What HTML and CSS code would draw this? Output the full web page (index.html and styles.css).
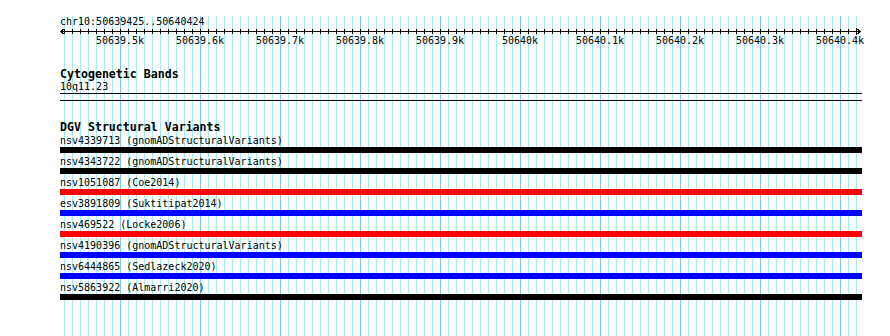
FILE: index.html
```html
<!DOCTYPE html>
<html lang="en">
<head>
    <meta charset="UTF-8">
    <title>chr10:50639425..50640424</title>
    <link rel="stylesheet" href="styles.css">
</head>
<body>
    <div class="view">
        <div class="ruler">
            <div class="ruler-loc">chr10:50639425..50640424</div>
            <svg class="ruler-axis" width="802" height="7" viewBox="0 0 802 7">
                <defs>
                    <pattern id="ticks" x="4" y="0" width="8" height="7" patternUnits="userSpaceOnUse">
                        <rect x="0" y="1" width="1" height="5" fill="#000"/>
                    </pattern>
                </defs>
                <rect x="4" y="0" width="793" height="7" fill="url(#ticks)"/>
                <path d="M0 3.5H800" stroke="#000" stroke-width="1"/>
                <polyline points="4.5,0.5 0.5,3.5 4.5,6.5" fill="none" stroke="#000"/>
                <polyline points="796.5,0.5 800.5,3.5 796.5,6.5" fill="none" stroke="#000"/>
            </svg>
            <div class="ruler-labels">
                <span>50639.5k</span>
                <span>50639.6k</span>
                <span>50639.7k</span>
                <span>50639.8k</span>
                <span>50639.9k</span>
                <span>50640k</span>
                <span>50640.1k</span>
                <span>50640.2k</span>
                <span>50640.3k</span>
                <span>50640.4k</span>
            </div>
        </div>

        <div class="track track-bands">
            <div class="track-title">Cytogenetic Bands</div>
            <div class="feature-label">10q11.23</div>
            <div class="band"></div>
        </div>

        <div class="track track-dgv">
            <div class="track-title">DGV Structural Variants</div>
            <div class="feature">
                <div class="feature-label">nsv4339713 (gnomADStructuralVariants)</div>
                <div class="bar bar-black"></div>
            </div>
            <div class="feature">
                <div class="feature-label">nsv4343722 (gnomADStructuralVariants)</div>
                <div class="bar bar-black"></div>
            </div>
            <div class="feature">
                <div class="feature-label">nsv1051087 (Coe2014)</div>
                <div class="bar bar-red"></div>
            </div>
            <div class="feature">
                <div class="feature-label">esv3891809 (Suktitipat2014)</div>
                <div class="bar bar-blue"></div>
            </div>
            <div class="feature">
                <div class="feature-label">nsv469522 (Locke2006)</div>
                <div class="bar bar-red"></div>
            </div>
            <div class="feature">
                <div class="feature-label">nsv4190396 (gnomADStructuralVariants)</div>
                <div class="bar bar-blue"></div>
            </div>
            <div class="feature">
                <div class="feature-label">nsv6444865 (Sedlazeck2020)</div>
                <div class="bar bar-blue"></div>
            </div>
            <div class="feature">
                <div class="feature-label">nsv5863922 (Almarri2020)</div>
                <div class="bar bar-black"></div>
            </div>
        </div>
    </div>
</body>
</html>
```

FILE: styles.css
```css
:root {
    --grid-minor: #aaeaf2;
    --grid-major: #7dc8f0;
    --ink: #000;
    --red: #ff0000;
    --blue: #0000ff;
}
* { box-sizing: border-box; }
html, body {
    margin: 0;
    background: #fff;
}
body {
    font-family: 'DejaVu Sans Mono', 'Liberation Mono', monospace;
    font-size: 10px;
    color: var(--ink);
}
.view {
    margin-left: 60px;
    width: 802px;
    min-height: 100vh;
    padding-top: 16px;
    background:
        linear-gradient(to right, var(--grid-major) 1px, transparent 1px) 60px 0 / 80px 100% repeat-x,
        linear-gradient(to right, var(--grid-minor) 1px, transparent 1px) 4px 0 / 8px 100% repeat-x;
    background-clip: content-box;
    background-origin: border-box;
}
.ruler-loc {
    line-height: 12px;
}
.ruler-axis {
    display: block;
    shape-rendering: crispEdges;
}
.ruler-labels {
    display: flex;
    padding-left: 20px;
    line-height: 12px;
}
.ruler-labels span {
    flex: 0 0 80px;
    text-align: center;
}
.track-title {
    font-weight: bold;
    font-size: 11.6px;
    line-height: 14px;
}
.track-bands {
    margin-top: 20px;
}
.track-bands .feature-label {
    line-height: 12px;
}
.band {
    height: 8px;
    border-top: 1px solid var(--ink);
    border-bottom: 1px solid var(--ink);
}
.track-dgv {
    margin-top: 19px;
}
.feature {
    margin-bottom: 2px;
}
.feature-label {
    line-height: 13px;
    white-space: nowrap;
}
.bar {
    height: 6px;
}
.bar-black { background: var(--ink); }
.bar-red { background: var(--red); }
.bar-blue { background: var(--blue); }
```
